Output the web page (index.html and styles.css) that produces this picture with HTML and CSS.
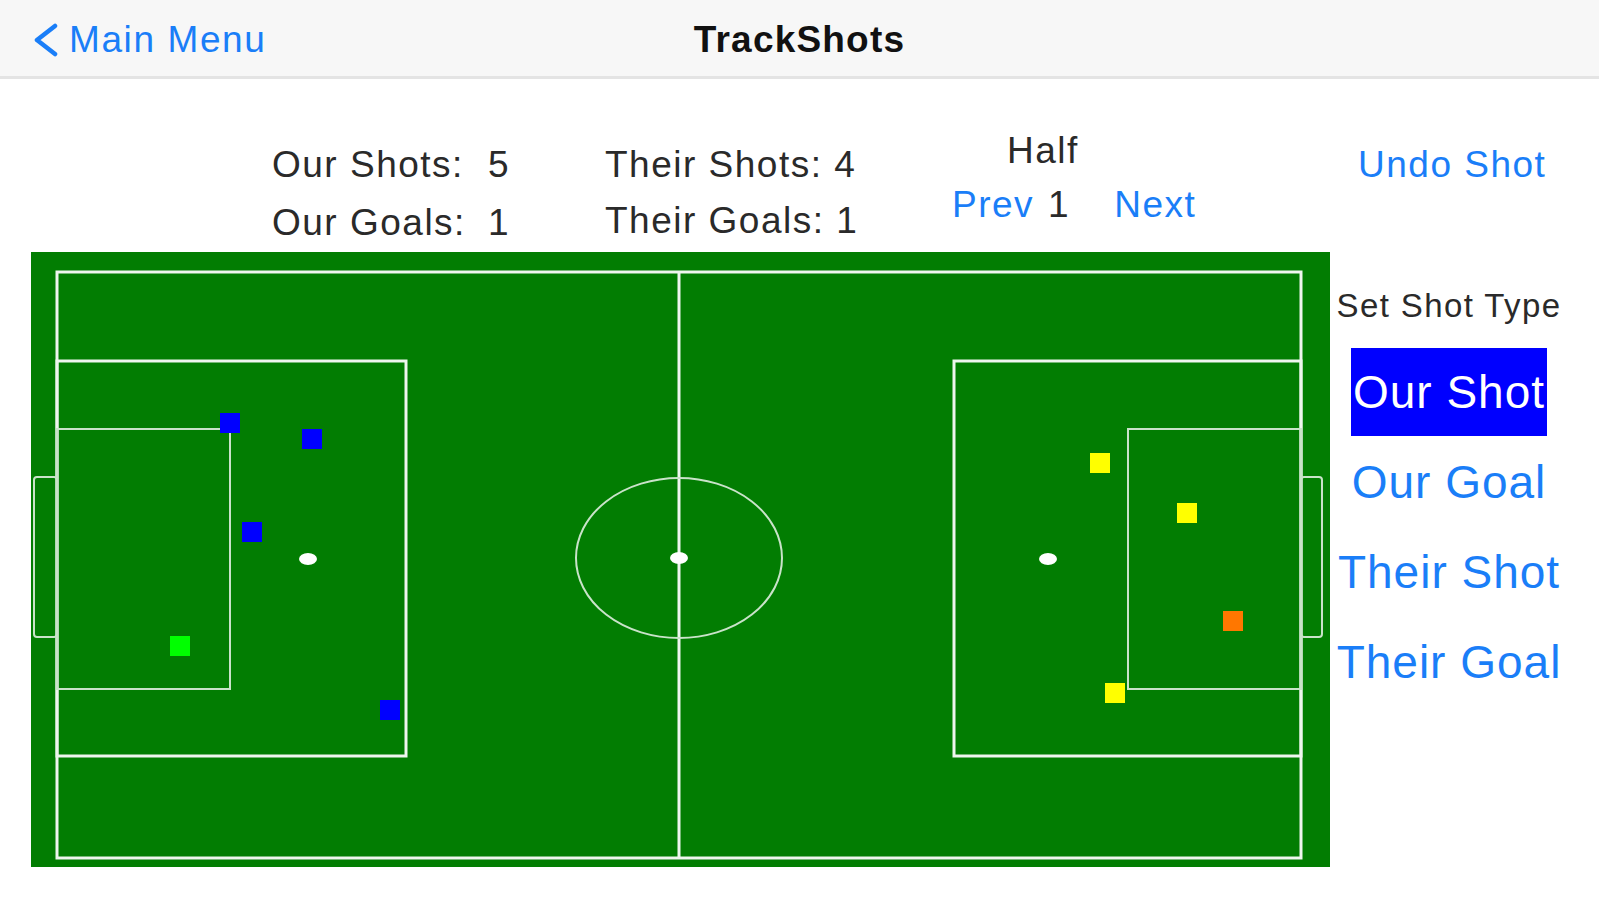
FILE: index.html
```html
<html>
  <head>
    <title>TrackShots</title>

    <link rel="stylesheet" href="styles.css">
  </head>
  <body>
    <div class="navbar">
      <a class="nav-back">
        <svg class="chevron" width="26" height="34" viewBox="0 0 26 34">
          <polyline points="23,3 5,17 23,31" />
        </svg>
        <span>Main Menu</span>
      </a>
      <div class="nav-title">TrackShots</div>
      <div></div>
    </div>

    <div class="stats">
      <div class="tally ours">
        <span class="label">Our Shots:</span><span class="value">5</span>
        <span class="label">Our Goals:</span><span class="value">1</span>
      </div>
      <div class="tally">
        <div>Their Shots: 4</div>
        <div>Their Goals: 1</div>
      </div>
      <div class="half">
        <div class="half-title">Half</div>
        <div class="half-nav">
          <a class="link">Prev</a>
          <span class="half-num">1</span>
          <a class="link next">Next</a>
        </div>
      </div>
      <div class="undo">
        <a class="link">Undo Shot</a>
      </div>
    </div>

    <div class="board">
      <svg class="pitch" width="1299" height="615" viewBox="0 0 1299 615">
        <rect class="grass" x="0" y="0" width="1299" height="615" />

        <!-- markings -->
        <rect class="line" x="26" y="20" width="1244" height="586" />
        <line class="line" x1="648" y1="20" x2="648" y2="606" />
        <ellipse class="thin" cx="648" cy="306" rx="103" ry="80" />
        <ellipse class="spot" cx="648" cy="306" rx="9" ry="6" />

        <rect class="line" x="26" y="109" width="349" height="395" />
        <rect class="thin" x="26" y="177" width="173" height="260" />
        <rect class="thin" x="3" y="225" width="23" height="160" rx="3" />
        <ellipse class="spot" cx="277" cy="307" rx="9" ry="6" />

        <rect class="line" x="923" y="109" width="347" height="395" />
        <rect class="thin" x="1097" y="177" width="173" height="260" />
        <rect class="thin" x="1270" y="225" width="21" height="160" rx="3" />
        <ellipse class="spot" cx="1017" cy="307" rx="9" ry="6" />

        <!-- shots -->
        <rect class="shot our-shot" x="189" y="161" width="20" height="20" />
        <rect class="shot our-shot" x="271" y="177" width="20" height="20" />
        <rect class="shot our-shot" x="211" y="270" width="20" height="20" />
        <rect class="shot our-goal" x="139" y="384" width="20" height="20" />
        <rect class="shot our-shot" x="349" y="448" width="20" height="20" />

        <rect class="shot their-shot" x="1059" y="201" width="20" height="20" />
        <rect class="shot their-shot" x="1146" y="251" width="20" height="20" />
        <rect class="shot their-goal" x="1192" y="359" width="20" height="20" />
        <rect class="shot their-shot" x="1074" y="431" width="20" height="20" />
      </svg>

      <div class="shot-types">
        <div class="shot-types-title">Set Shot Type</div>
        <button class="shot-type selected">Our Shot</button>
        <button class="shot-type">Our Goal</button>
        <button class="shot-type">Their Shot</button>
        <button class="shot-type">Their Goal</button>
      </div>
    </div>
  </body>
</html>
```

FILE: styles.css
```css
body {
  margin: 0;
  background-color: #ffffff;
  color: #2a2a2a;
  font-family: "Liberation Sans", Arial, Helvetica, sans-serif;
}

.link {
  color: #1a7ef8;
  cursor: pointer;
}

/* top bar */

.navbar {
  display: grid;
  grid-template-columns: 1fr auto 1fr;
  align-items: center;
  box-sizing: border-box;
  height: 79px;
  padding-top: 3px;
  background-color: #f7f7f7;
  border-bottom: 3px solid #e4e4e4;
}

.nav-back {
  display: flex;
  align-items: center;
  padding-left: 32px;
  color: #1a7ef8;
  font-size: 37px;
  letter-spacing: 1.6px;
  cursor: pointer;
}

.chevron {
  margin-right: 11px;
}

.chevron polyline {
  fill: none;
  stroke: #1a7ef8;
  stroke-width: 4.5;
  stroke-linecap: round;
  stroke-linejoin: round;
}

.nav-title {
  font-size: 37px;
  font-weight: bold;
  letter-spacing: 1.2px;
  color: #111111;
}

/* counters */

.stats {
  display: grid;
  grid-template-columns: 333px 347px 406px auto;
  box-sizing: border-box;
  height: 173px;
  padding: 48px 0 0 272px;
  font-size: 37px;
  letter-spacing: 1.5px;
}

.tally {
  margin-top: 10px;
  line-height: 56px;
}

.ours {
  display: grid;
  grid-template-columns: auto auto;
  justify-content: start;
  column-gap: 22px;
}

.half-title {
  padding-left: 55px;
  line-height: 48px;
}

.half-nav {
  display: flex;
  line-height: 60px;
}

.half-num {
  margin-left: 14px;
}

.next {
  margin-left: 44px;
}

.undo {
  margin-top: 10px;
  line-height: 56px;
}

/* pitch and shot type picker */

.board {
  display: flex;
  padding: 0 31px;
}

.pitch {
  display: block;
  flex: none;
}

.grass {
  fill: #027d02;
}

.line {
  fill: none;
  stroke: #eef6ee;
  stroke-width: 3;
}

.thin {
  fill: none;
  stroke: #c9e3c9;
  stroke-width: 2;
}

.spot {
  fill: #ffffff;
}

.our-shot {
  fill: #0000ff;
}

.our-goal {
  fill: #00ff00;
}

.their-shot {
  fill: #ffff00;
}

.their-goal {
  fill: #ff7700;
}

.shot-types {
  flex: 1;
  display: flex;
  flex-direction: column;
  align-items: center;
}

.shot-types-title {
  margin-top: 36px;
  margin-bottom: 24px;
  font-size: 33px;
  letter-spacing: 1.4px;
  line-height: 36px;
}

.shot-type {
  height: 88px;
  margin-bottom: 2px;
  padding: 0 2px;
  border: none;
  background: none;
  color: #1a7ef8;
  font-family: inherit;
  font-size: 46px;
  letter-spacing: 1px;
  cursor: pointer;
}

.shot-type.selected {
  background-color: #0000ff;
  color: #ffffff;
}
```
